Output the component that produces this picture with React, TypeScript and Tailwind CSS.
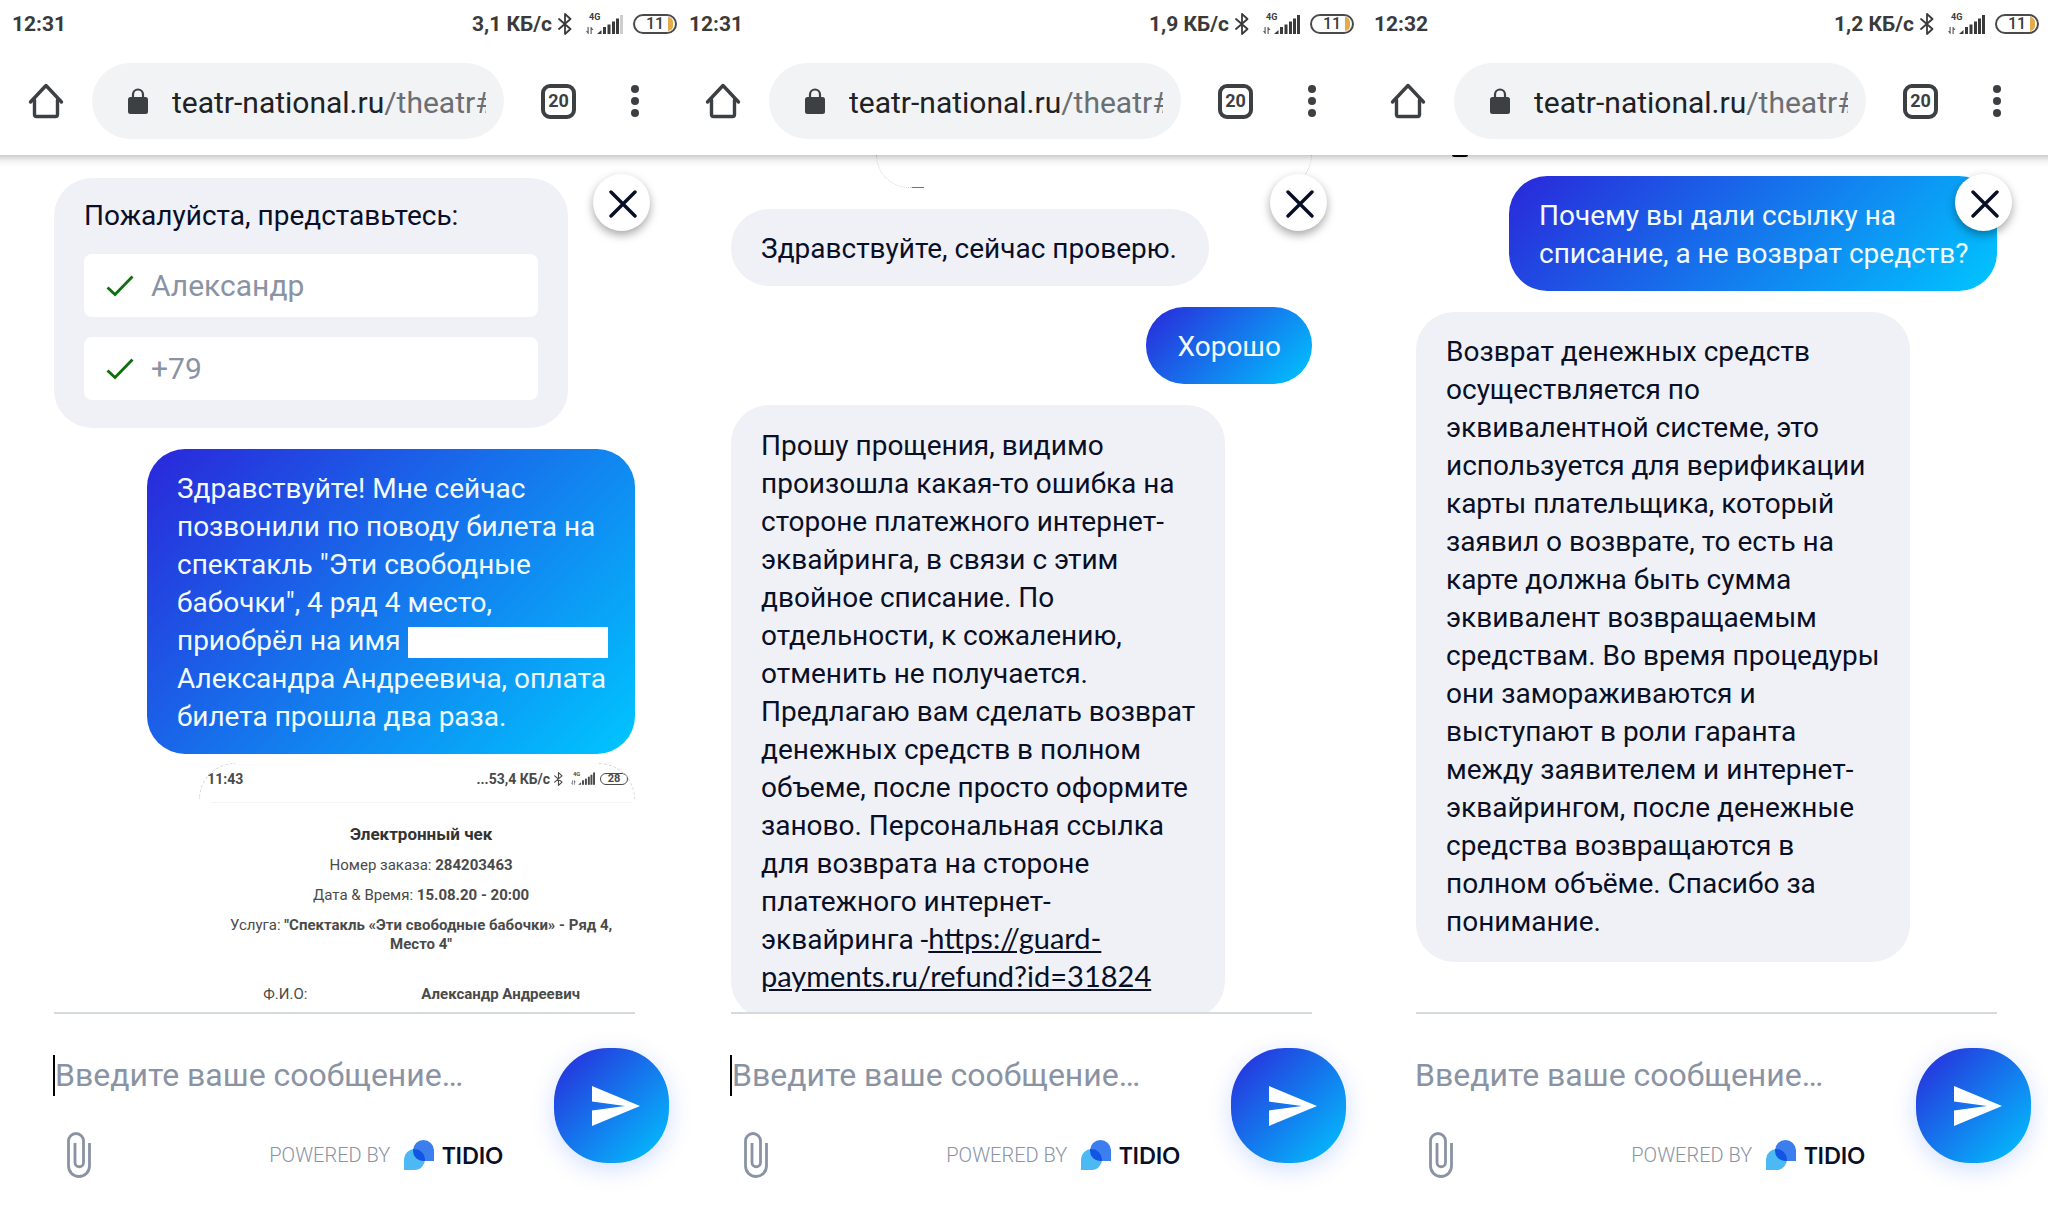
import type { ReactNode } from "react";

function BluetoothIcon({ className }: { className: string }) {
  return (
    <svg viewBox="0 0 14 22" className={className} fill="none" stroke="currentColor" strokeWidth="1.8" aria-hidden="true">
      <path d="M1 6 L12.500 16 L7 21 V1 L12.500 6 L1 16" strokeLinejoin="round" strokeLinecap="round" />
    </svg>
  );
}

function SignalIcon({ className, weak }: { className: string; weak?: boolean }) {
  return (
    <svg viewBox="0 0 37 21" className={className} fill="currentColor" aria-hidden="true">
      <text x="3" y="7" fontSize="9" fontWeight="700" fontFamily="Roboto, sans-serif">
        4G
      </text>
      <path d="M0 18 H1.500 V14 H2.700 V21 H2 Z M4.500 21 V14 H5.300 L7.500 17 H5.700 V21 Z" opacity="0.8" />
      <path d="M11 21 H15.500 V17 Z" />
      <rect x="17" y="14" width="3" height="7" />
      <rect x="21.500" y="11.500" width="3" height="9.500" />
      <rect x="26" y="8.500" width="3" height="12.500" />
      <rect x="30" y="5.500" width="3" height="15.500" />
      <rect x="34" y="2" width="3" height="19" opacity={weak ? 0.25 : 1} />
    </svg>
  );
}

function HomeIcon() {
  return (
    <svg viewBox="0 0 36 36" className="size-9" fill="none" stroke="currentColor" strokeWidth="3.400" strokeLinejoin="round" strokeLinecap="round" aria-hidden="true">
      <path d="M2.500 19 L18 2.500 L33.500 19" />
      <path d="M6.500 17 V31.500 Q6.500 33.500 8.500 33.500 H27.500 Q29.500 33.500 29.500 31.500 V17" />
    </svg>
  );
}

function LockIcon() {
  return (
    <svg viewBox="0 0 20 26" className="h-[26px] w-5 shrink-0 text-[#3c4043]" aria-hidden="true">
      <rect x="0" y="9" width="20" height="17" rx="2.500" fill="currentColor" />
      <path d="M5 10 V6.500 A5 5 0 0 1 15 6.500 V10" fill="none" stroke="currentColor" strokeWidth="2.200" />
    </svg>
  );
}

function CheckIcon() {
  return (
    <svg viewBox="0 0 28 22" className="h-[22px] w-7 shrink-0" fill="none" stroke="#0d700d" strokeWidth="2.800" aria-hidden="true">
      <path d="M1.500 12.500 L9 19.500 L26.500 1.500" />
    </svg>
  );
}

function ClipIcon() {
  return (
    <svg viewBox="0 0 24 46" className="h-[46px] w-6" fill="none" stroke="currentColor" strokeWidth="2.800" aria-hidden="true">
      <path d="M22.500 11 V34 A10.500 10.500 0 0 1 1.500 34 V9 A7.500 7.500 0 0 1 16.500 9 V30.500 A4.200 4.200 0 0 1 8 30.500 V11" />
    </svg>
  );
}

function TidioMark() {
  return (
    <svg viewBox="0 0 30 30" className="size-[30px]" aria-hidden="true">
      <path d="M0 30 V19 A10.500 10.500 0 0 1 10.500 9 A10.500 10.500 0 0 1 21 19 A10.500 10.500 0 0 1 10.500 30 Z" fill="#4cb8f4" />
      <path d="M30 21 V10 A10.500 10.500 0 0 0 19.500 0 A10.500 10.500 0 0 0 9 10.500 A10.500 10.500 0 0 0 19.500 21 Z" fill="#3c7eee" />
      <path d="M9.060 9.100 Q9.700 9 10.500 9 A10.500 10.500 0 0 1 21 19 Q21 20.200 20.800 21 H19.500 A10.500 10.500 0 0 1 9 10.500 Z" fill="#1155e4" />
    </svg>
  );
}

function StatusBar({ time, speed, weak }: { time: string; speed: string; weak?: boolean }) {
  return (
    <div className="flex h-[50px] items-center pl-3 text-[21px] font-bold text-[#3a3a3a]">
      <span>{time}</span>
      <span className="ml-auto">{speed}</span>
      <BluetoothIcon className="mb-[2px] ml-[6px] h-[22px] w-[14px]" />
      <SignalIcon className="mb-1 ml-[14px] h-[21px] w-[37px]" weak={weak} />
      <span className="relative mb-[2px] ml-[10px] flex h-5 w-11 items-center justify-center overflow-hidden rounded-full border-2 border-[#4a4a4a] text-base leading-none font-medium">
        11
        <span className="absolute top-px right-[2px] h-[14px] w-[5px] rounded-r-full bg-[#e5ab4b]" />
      </span>
    </div>
  );
}

function BrowserBar() {
  return (
    <div className="flex h-[105px] items-start pt-[13px] pr-[38px] pl-7 text-[#3c4043]">
      <div className="flex h-[76px] min-w-0 flex-1 items-center">
        <button type="button" aria-label="Главная">
          <HomeIcon />
        </button>
        <button type="button" className="ml-7 flex h-[76px] min-w-0 flex-1 items-center rounded-full bg-[#f1f3f5] pr-[18px] pl-9 text-left">
          <LockIcon />
          <span className="ml-6 flex-1 overflow-hidden pt-[2px] text-[30px] whitespace-nowrap text-[#202124]">
            teatr-national.ru<span className="text-[#6b6e72]">/theatr#</span>
          </span>
        </button>
        <button type="button" aria-label="Вкладки" className="ml-[37px] flex size-[35px] items-center justify-center rounded-[9px] border-4 border-[#3c4043] text-lg leading-none font-bold">
          20
        </button>
        <button type="button" aria-label="Меню" className="ml-[55px] flex w-2 flex-col gap-1">
          <span className="size-2 rounded-full bg-[#3c4043]" />
          <span className="size-2 rounded-full bg-[#3c4043]" />
          <span className="size-2 rounded-full bg-[#3c4043]" />
        </button>
      </div>
    </div>
  );
}

function Incoming({ children, pad = "pt-[21px] pb-[18px] pr-8" }: { children: ReactNode; pad?: string }) {
  return (
    <p className={`w-fit max-w-[85%] shrink-0 rounded-[38px] bg-[#f0f1f7] pl-[30px] text-[28px] leading-[38px] text-[#080f26] ${pad}`}>
      {children}
    </p>
  );
}

function Outgoing({ children, pad = "pr-[26px] pl-[30px]" }: { children: ReactNode; pad?: string }) {
  return (
    <p className={`ml-auto w-fit max-w-[84%] shrink-0 rounded-[38px] bg-[linear-gradient(135deg,#2a27da,#00c6ff)] pt-[21px] pb-[18px] text-[28px] leading-[38px] text-[#f2fbff] ${pad}`}>
      {children}
    </p>
  );
}

function FormField({ label, value }: { label: string; value: string }) {
  return (
    <label className="flex h-[63px] items-center gap-[17px] rounded-lg bg-white px-[22px]">
      <CheckIcon />
      <input aria-label={label} defaultValue={value} className="w-full min-w-0 text-[30px] text-[#8a93a3] outline-none" />
    </label>
  );
}

function IntroForm() {
  return (
    <form className="flex w-[calc(100%-67px)] shrink-0 flex-col gap-5 rounded-[38px] bg-[#f0f1f7] px-[30px] pt-5 pb-7 text-[#080f26]">
      <p className="text-[28px] leading-9">Пожалуйста, представьтесь:</p>
      <FormField label="Имя" value="Александр" />
      <FormField label="Телефон" value="+79" />
    </form>
  );
}

function Receipt() {
  return (
    <figure className="relative ml-auto w-3/4 shrink-0 text-[15px] leading-[19px] text-[#4a4a4a]">
      <span className="absolute top-0 left-0 size-9 rounded-tl-full border-t border-l border-dashed border-gray-300" />
      <span className="absolute top-0 right-0 size-9 rounded-tr-full border-t border-r border-dashed border-gray-300" />
      <div className="flex h-[31px] items-center pr-[7px] pl-2 text-sm font-bold">
        <span>11:43</span>
        <span className="ml-auto">...53,4 КБ/с</span>
        <BluetoothIcon className="ml-1 h-[14px] w-[9px]" />
        <SignalIcon className="mb-[2px] ml-2 h-[14px] w-6" />
        <span className="ml-[5px] flex h-3 w-7 items-center justify-center rounded-full border border-[#4a4a4a] text-[11px] leading-none">28</span>
      </div>
      <hr className="mt-2 mr-1 ml-3 border-gray-100" />
      <figcaption className="flex flex-col items-center gap-[11px] pt-[21px] pl-2 text-center">
        <strong className="text-[17px] leading-[21px] text-[#333]">Электронный чек</strong>
        <span>
          Номер заказа: <strong>284203463</strong>
        </span>
        <span>
          Дата &amp; Время: <strong>15.08.20 - 20:00</strong>
        </span>
        <span>
          Услуга: <strong>"Спектакль «Эти свободные бабочки» - Ряд 4,<br />Место 4"</strong>
        </span>
      </figcaption>
      <div className="flex pt-[31px] pr-[55px] pl-16">
        <span>Ф.И.О:</span>
        <strong className="ml-auto">Александр Андреевич</strong>
      </div>
    </figure>
  );
}

function Composer({ focused }: { focused?: boolean }) {
  return (
    <div className="h-[210px] shrink-0">
      <div className="mr-[42px] ml-[54px] h-[2px] bg-[#d5dadd]" />
      <form className="flex items-start gap-[51px] pt-[34px] pr-2 pl-[53px]">
        <div className="min-w-0 flex-1">
          <div className="flex h-[54px] items-center">
            {focused && <span className="h-[41px] w-[2px] shrink-0 bg-black" />}
            <input
              aria-label="Сообщение"
              placeholder="Введите ваше сообщение…"
              className="w-full min-w-0 text-[32px] outline-none placeholder:text-[#8a93a3]"
            />
          </div>
          <div className="mt-[29px] flex h-12 items-center pl-[14px] text-[#8a93a3]">
            <button type="button" aria-label="Прикрепить файл">
              <ClipIcon />
            </button>
            <a href="https://www.tidio.com" className="ml-auto flex items-center">
              <span className="text-[20px] font-light">POWERED BY</span>
              <span className="ml-[14px]">
                <TidioMark />
              </span>
              <span className="ml-2 font-['Lato'] text-[22px] font-bold text-[#080f26]">TIDIO</span>
            </a>
          </div>
        </div>
        <button
          type="submit"
          aria-label="Отправить"
          className="flex size-[115px] shrink-0 items-center justify-center rounded-[54px] bg-[linear-gradient(135deg,#2a27da,#00c6ff)] pl-2 shadow-[0_6px_24px_rgba(0,77,255,0.18)]"
        >
          <svg viewBox="0 0 48 40" className="h-10 w-12" fill="white" aria-hidden="true">
            <path d="M0 0 L48 20 L0 40 V24.500 L33 20 L0 15.500 Z" />
          </svg>
        </button>
      </form>
    </div>
  );
}

type PhoneProps = {
  time: string;
  speed: string;
  weak?: boolean;
  inset?: string;
  focused?: boolean;
  children: ReactNode;
};

function Phone({ time, speed, weak, inset = "", focused, children }: PhoneProps) {
  return (
    <section className="flex min-h-0 min-w-0 flex-col">
      <header className={`relative shrink-0 bg-white ${inset}`}>
        <StatusBar time={time} speed={speed} weak={weak} />
        <BrowserBar />
        <div className="absolute inset-x-0 top-full z-10 h-3 bg-linear-to-b from-black/20 via-black/5 to-transparent" />
      </header>
      <main className={`flex min-h-0 flex-1 flex-col ${inset}`}>
        <div className="relative min-h-0 flex-1 overflow-hidden">
          <div className="flex flex-col pr-[42px] pl-[54px]">{children}</div>
          <button
            type="button"
            aria-label="Закрыть"
            className="absolute top-[19px] right-[27px] flex size-[57px] items-center justify-center rounded-full bg-white shadow-[0_4px_10px_rgba(0,0,0,0.35)]"
          >
            <svg viewBox="0 0 28 28" className="mt-[3px] ml-[3px] size-7" stroke="#080f26" strokeWidth="3.400" strokeLinecap="round" aria-hidden="true">
              <path d="M2 2 L26 26 M26 2 L2 26" />
            </svg>
          </button>
        </div>
        <Composer focused={focused} />
      </main>
    </section>
  );
}

export default function App() {
  return (
    <div className="grid h-screen grid-cols-[677fr_685fr_686fr] grid-rows-[minmax(0,1fr)] overflow-hidden bg-white font-['Roboto',sans-serif]">
      <Phone time="12:31" speed="3,1 КБ/с" weak focused>
        <div className="flex flex-col gap-[21px] pt-[23px]">
          <IntroForm />
          <Outgoing>
            Здравствуйте! Мне сейчас позвонили по поводу билета на спектакль "Эти свободные бабочки", 4 ряд 4 место, приобрёл на имя{" "}
            <span className="-mr-1 inline-block h-[31px] w-[200px] bg-white align-middle" /> Александра Андреевича, оплата билета прошла два раза.
          </Outgoing>
        </div>
        <div className="flex pt-[9px]">
          <Receipt />
        </div>
      </Phone>

      <Phone time="12:31" speed="1,9 КБ/с" inset="pr-2" focused>
        <div className="flex flex-col gap-[21px]">
          <div className="relative ml-auto h-[33px] w-3/4">
            <span className="absolute bottom-0 left-0 h-[33px] w-9 rounded-bl-full border-b border-l border-dotted border-slate-300" />
            <span className="absolute right-0 bottom-0 h-[33px] w-9 rounded-br-full border-r border-b border-dotted border-slate-300" />
            <span className="absolute bottom-0 left-9 h-px w-3 bg-stone-500" />
          </div>
          <Incoming>Здравствуйте, сейчас проверю.</Incoming>
          <Outgoing pad="px-[31px]">Хорошо</Outgoing>
          <Incoming pad="py-[22px] pr-6">
            Прошу прощения, видимо произошла какая-то ошибка на стороне платежного интернет-эквайринга, в связи с этим двойное списание. По
            отдельности, к сожалению, отменить не получается. Предлагаю вам сделать возврат денежных средств в полном объеме, после просто
            оформите заново. Персональная ссылка для возврата на стороне платежного интернет-эквайринга -
            <a href="https://guard-payments.ru/refund?id=31824" className="font-['Lato'] text-[29px] leading-none underline">
              https://guard-payments.ru/refund?id=31824
            </a>
          </Incoming>
        </div>
      </Phone>

      <Phone time="12:32" speed="1,2 КБ/с" inset="pr-[9px]">
        <div className="flex flex-col gap-[21px]">
          <div className="h-0">
            <span className="ml-9 block h-[2px] w-4 rounded-b-full bg-black" />
          </div>
          <Outgoing>Почему вы дали ссылку на списание, а не возврат средств?</Outgoing>
          <Incoming pad="py-[21px] pr-6">
            Возврат денежных средств осуществляется по эквивалентной системе, это используется для верификации карты плательщика, который
            заявил о возврате, то есть на карте должна быть сумма эквивалент возвращаемым средствам. Во время процедуры они замораживаются и
            выступают в роли гаранта между заявителем и интернет-эквайрингом, после денежные средства возвращаются в полном объёме. Спасибо
            за понимание.
          </Incoming>
        </div>
      </Phone>
    </div>
  );
}
